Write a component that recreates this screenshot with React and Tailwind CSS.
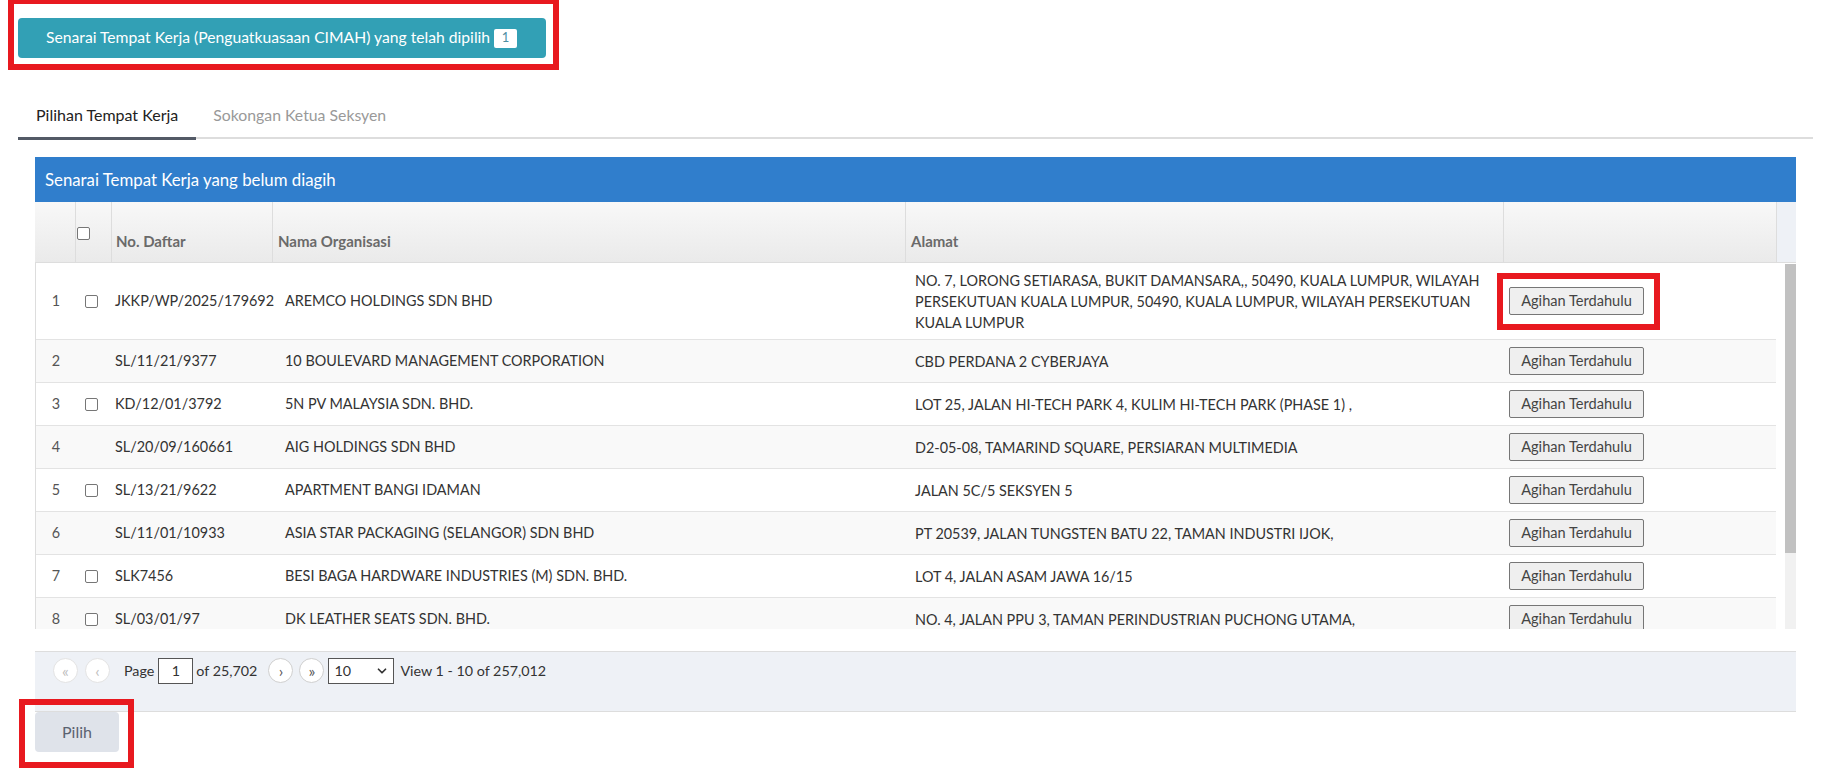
import React from "react";
import { ChevronDown } from "lucide-react";

const rows = [
  {
    no: "1",
    check: true,
    daftar: "JKKP/WP/2025/179692",
    nama: "AREMCO HOLDINGS SDN BHD",
    alamat: [
      "NO. 7, LORONG SETIARASA, BUKIT DAMANSARA,, 50490, KUALA LUMPUR, WILAYAH",
      "PERSEKUTUAN KUALA LUMPUR, 50490, KUALA LUMPUR, WILAYAH PERSEKUTUAN",
      "KUALA LUMPUR",
    ],
  },
  { no: "2", check: false, daftar: "SL/11/21/9377", nama: "10 BOULEVARD MANAGEMENT CORPORATION", alamat: ["CBD PERDANA 2 CYBERJAYA"] },
  { no: "3", check: true, daftar: "KD/12/01/3792", nama: "5N PV MALAYSIA SDN. BHD.", alamat: ["LOT 25, JALAN HI-TECH PARK 4, KULIM HI-TECH PARK (PHASE 1) ,"] },
  { no: "4", check: false, daftar: "SL/20/09/160661", nama: "AIG HOLDINGS SDN BHD", alamat: ["D2-05-08, TAMARIND SQUARE, PERSIARAN MULTIMEDIA"] },
  { no: "5", check: true, daftar: "SL/13/21/9622", nama: "APARTMENT BANGI IDAMAN", alamat: ["JALAN 5C/5 SEKSYEN 5"] },
  { no: "6", check: false, daftar: "SL/11/01/10933", nama: "ASIA STAR PACKAGING (SELANGOR) SDN BHD", alamat: ["PT 20539, JALAN TUNGSTEN BATU 22, TAMAN INDUSTRI IJOK,"] },
  { no: "7", check: true, daftar: "SLK7456", nama: "BESI BAGA HARDWARE INDUSTRIES (M) SDN. BHD.", alamat: ["LOT 4, JALAN ASAM JAWA 16/15"] },
  { no: "8", check: true, daftar: "SL/03/01/97", nama: "DK LEATHER SEATS SDN. BHD.", alamat: ["NO. 4, JALAN PPU 3, TAMAN PERINDUSTRIAN PUCHONG UTAMA,"] },
  { no: "9", check: true, daftar: "SL/10/02/4411", nama: "EVERGREEN FIBREBOARD BERHAD", alamat: ["PLO 22, KAWASAN PERINDUSTRIAN NITAR 2,"] },
  { no: "10", check: false, daftar: "SL/12/05/8820", nama: "FAJAR BARU BUILDER SDN BHD", alamat: ["JALAN PERMAS 10/2, BANDAR BARU PERMAS JAYA"] },
];

const Box = () => (
  <span className="block w-[13px] h-[13px] border border-[#767676] rounded-[2px] bg-white"></span>
);

const Circle = ({ children, disabled, className = "" }) => (
  <div
    className={`flex shrink-0 items-center justify-center w-[25px] h-[25px] rounded-full border bg-white text-[16px] leading-[16px] ${className} ${
      disabled ? "border-[#e3e3e3] text-[#bdbdbd]" : "border-[#cfcfcf] text-[#555]"
    }`}
  >
    {children}
  </div>
);

export default function App() {
  return (
    <div className="relative w-[1821px] h-[769px] overflow-hidden bg-white font-[Lato,sans-serif] text-[#333]">
      {/* TOP BUTTON */}
      <div className="pt-[18px] pl-[18px]">
        <button className="flex items-center h-[40px] w-[528px] pl-[28px] rounded-[4px] bg-[#32a0b5] text-white text-[15.7px]">
          <span>Senarai Tempat Kerja (Penguatkuasaan CIMAH) yang telah dipilih</span>
          <span className="ml-[4px] flex items-center justify-center w-[23px] h-[19px] rounded-[2px] bg-white text-[#4f8fa3] text-[13px]">
            1
          </span>
        </button>
      </div>

      {/* TABS */}
      <div className="flex items-start ml-[18px] w-[1795px] mt-[39px]">
        <div className="h-[43px] px-[18px] pt-[8px] border-b-[3px] border-[#535a66] text-[16px] leading-[20px] text-[#222]">
          Pilihan Tempat Kerja
        </div>
        <div className="h-[42px] px-[17px] pt-[8px] border-b-2 border-[#dddddd] text-[15.8px] leading-[20px] text-[#999]">
          Sokongan Ketua Seksyen
        </div>
        <div className="flex-1 h-[42px] border-b-2 border-[#dddddd]"></div>
      </div>

      {/* PANEL */}
      <div className="ml-[35px] mt-[17px] w-[1761px]">
        <div className="h-[45px] flex items-center pl-[10px] bg-[#307ecc] text-white text-[16.8px]">
          Senarai Tempat Kerja yang belum diagih
        </div>

        {/* HEADER */}
        <div className="flex h-[61px] border-b border-[#dddddd] text-[15px] font-bold leading-[20px] text-[#6a6a6a]">
          <div className="w-[41px] border-r border-[#dddddd] bg-linear-to-b from-[#f8f8f8] to-[#eaeaea]"></div>
          <div className="w-[36px] pl-[1px] pt-[25px] border-r border-[#dddddd] bg-linear-to-b from-[#f8f8f8] to-[#eaeaea]">
            <Box />
          </div>
          <div className="w-[161px] pl-[4px] pt-[29px] border-r border-[#dddddd] bg-linear-to-b from-[#f8f8f8] to-[#eaeaea]">
            No. Daftar
          </div>
          <div className="w-[633px] pl-[5px] pt-[29px] border-r border-[#dddddd] bg-linear-to-b from-[#f8f8f8] to-[#eaeaea]">
            Nama Organisasi
          </div>
          <div className="w-[598px] pl-[5px] pt-[29px] border-r border-[#dddddd] bg-linear-to-b from-[#f8f8f8] to-[#eaeaea]">
            Alamat
          </div>
          <div className="w-[273px] border-r border-[#dddddd] bg-linear-to-b from-[#f8f8f8] to-[#eaeaea]"></div>
          <div className="flex-1 bg-[#eef1f6]"></div>
        </div>

        {/* BODY */}
        <div className="flex h-[366px] overflow-hidden border-l border-[#dddddd]">
          <div className="w-[1740px] text-[14.4px]">
            {rows.map((r, i) => (
              <div
                key={r.no}
                className={`flex items-center border-b border-[#e3e3e3] ${r.alamat.length > 1 ? "h-[77px]" : "h-[43px]"} ${
                  i % 2 ? "bg-[#f9f9f9]" : "bg-white"
                }`}
              >
                <div className="w-[40px] text-center text-[#555]">{r.no}</div>
                <div className="w-[36px] pl-[9px]">{r.check && <Box />}</div>
                <div className="w-[170px] pl-[3px] whitespace-nowrap">{r.daftar}</div>
                <div className="w-[624px] pl-[3px] whitespace-nowrap">{r.nama}</div>
                <div className="w-[598px] pl-[9px] leading-[21px] whitespace-nowrap">
                  {r.alamat.map((l) => (
                    <div key={l}>{l}</div>
                  ))}
                </div>
                <div className="w-[272px] pl-[5px]">
                  <button className="h-[28px] w-[135px] border border-[#767676] rounded-[2px] bg-[#efefef] text-[14.6px] text-[#444]">
                    Agihan Terdahulu
                  </button>
                </div>
              </div>
            ))}
          </div>
          {/* scrollbar */}
          <div className="flex-1 flex flex-col pl-[9px] pt-px">
            <div className="h-[289px] bg-[#c1c1c1]"></div>
            <div className="flex-1 bg-[#f1f1f1]"></div>
          </div>
        </div>

        <div className="h-[22px]"></div>

        {/* PAGER */}
        <div className="h-[61px] pt-[5px] pl-[18px] border-y border-[#dddddd] bg-[#eef1f6] text-[14.3px]">
          <div className="flex items-center h-[27px]">
            <Circle disabled>«</Circle>
            <Circle disabled className="ml-[7px]">‹</Circle>
            <div className="ml-[14px]">Page</div>
            <input
              readOnly
              value="1"
              className="ml-[4px] w-[35px] h-[26px] border border-[#555] bg-white text-center text-[14.3px] outline-none"
            />
            <div className="ml-[3px]">of 25,702</div>
            <Circle className="ml-[11px]">›</Circle>
            <Circle className="ml-[6px]">»</Circle>
            <div className="ml-[4px] flex items-center justify-between w-[66px] h-[26px] pl-[5px] pr-[4px] border border-[#555] bg-white">
              <span>10</span>
              <ChevronDown size={14} strokeWidth={3} className="text-[#333]" />
            </div>
            <div className="ml-[6px]">View 1 - 10 of 257,012</div>
          </div>
        </div>

        {/* PILIH */}
        <button className="w-[84px] h-[40px] rounded-[4px] bg-[#dfe3ea] text-[16px] text-[#5a6270]">Pilih</button>
      </div>

      {/* RED ANNOTATION BOXES */}
      <div className="absolute left-[8px] top-[-2px] w-[551px] h-[72px] border-[6px] border-[#e8191f]"></div>
      <div className="absolute left-[1497px] top-[273px] w-[163px] h-[57px] border-[6px] border-[#e8191f]"></div>
      <div className="absolute left-[19px] top-[699px] w-[115px] h-[69px] border-[6px] border-[#e8191f]"></div>
    </div>
  );
}
